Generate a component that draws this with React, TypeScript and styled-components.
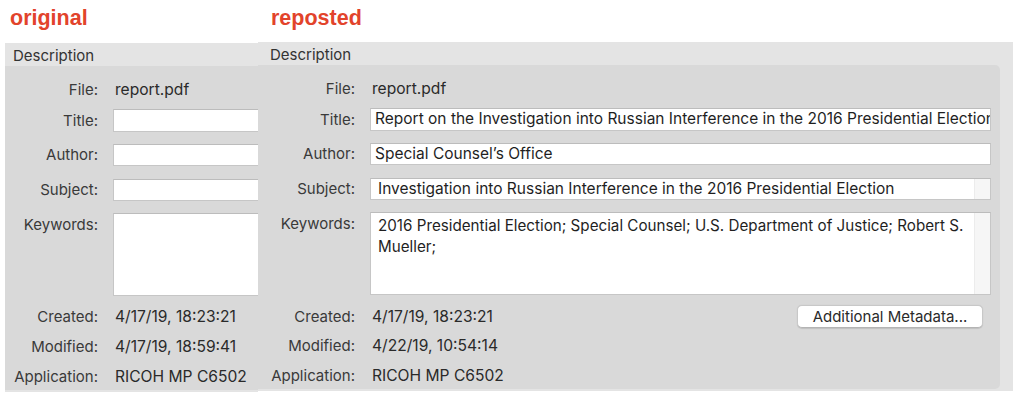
import React from "react";
import styled, { createGlobalStyle } from "styled-components";

const GlobalStyle = createGlobalStyle`
  html, body { margin: 0; padding: 0; background: #ffffff; }
  body { font-family: Inter, "Noto Sans", "Liberation Sans", sans-serif; -webkit-font-smoothing: antialiased; }
`;

const Page = styled.div`
  display: flex;
  align-items: flex-start;
  width: 1024px;
  height: 400px;
  padding-left: 5px;
  box-sizing: border-box;
`;

const Column = styled.div<{ $width: number }>`
  display: flex;
  flex-direction: column;
  width: ${(p) => p.$width}px;
  flex: none;
  overflow: hidden;
`;

const Heading = styled.div<{ $height: number; $indent: number }>`
  height: ${(p) => p.$height}px;
  box-sizing: border-box;
  padding: 6px 0 0 ${(p) => p.$indent}px;
  font-family: "Liberation Sans", Arial, sans-serif;
  font-weight: 700;
  font-size: 21.5px;
  line-height: 24px;
  color: #e2432b;
`;

const Panel = styled.div`
  display: flex;
  flex-direction: column;
  background: #e4e4e4;
  height: 349px;
`;

const PanelHeader = styled.div<{ $indent: number }>`
  height: 23px;
  box-sizing: border-box;
  flex: none;
  padding: 3px 0 0 ${(p) => p.$indent}px;
  font-size: 15px;
  line-height: 20px;
  color: #333333;
`;

const InnerBox = styled.div<{ $width?: number; $right: number }>`
  flex: none;
  height: 324px;
  width: ${(p) => (p.$width ? `${p.$width}px` : "auto")};
  margin-right: ${(p) => p.$right}px;
  background: #d9d9d9;
  border-radius: 0 5px 5px 0;
  display: flex;
  flex-direction: column;
  padding-right: 9px;
  box-sizing: border-box;
`;

const Row = styled.div<{ $label: number; $mt: number; $h: number; $top?: boolean }>`
  display: grid;
  grid-template-columns: ${(p) => p.$label}px 1fr;
  column-gap: 15px;
  margin-top: ${(p) => p.$mt}px;
  height: ${(p) => p.$h}px;
  align-items: ${(p) => (p.$top ? "start" : "center")};
  flex: none;
`;

const Label = styled.div<{ $pt?: number }>`
  text-align: right;
  font-size: 15px;
  line-height: 20px;
  color: #3a3a3a;
  padding-top: ${(p) => p.$pt ?? 0}px;
  white-space: nowrap;
`;

const Value = styled.div`
  font-size: 15.6px;
  line-height: 20px;
  color: #2a2a2a;
  white-space: nowrap;
  padding-left: 2px;
`;

const ValueWithButton = styled.div`
  display: flex;
  align-items: center;
  justify-content: space-between;
  padding-right: 8px;
`;

const Field = styled.div<{ $h: number; $pl: number }>`
  display: flex;
  height: ${(p) => p.$h}px;
  box-sizing: border-box;
  background: #ffffff;
  border: 1px solid #c6c6c6;
  border-top-color: #bcbcbc;
  overflow: hidden;
  padding-left: ${(p) => p.$pl}px;
  font-size: 15.5px;
  color: #1f1f1f;
`;

const FieldText = styled.div<{ $multi?: boolean }>`
  flex: 1;
  min-width: 0;
  overflow: hidden;
  white-space: ${(p) => (p.$multi ? "normal" : "nowrap")};
  font-size: ${(p) => (p.$multi ? "15.2px" : "inherit")};
  line-height: ${(p) => (p.$multi ? "21px" : "20px")};
  padding-top: ${(p) => (p.$multi ? "2px" : "0")};
`;

const Scroller = styled.div`
  width: 15px;
  flex: none;
  background: #f6f6f6;
  border-left: 1px solid #ececec;
`;

const MetaButton = styled.button`
  width: 186px;
  height: 23px;
  box-sizing: border-box;
  background: #ffffff;
  border: 1px solid #c8c8c8;
  border-bottom-color: #b4b4b4;
  border-radius: 5px;
  box-shadow: 0 0.5px 1px rgba(0, 0, 0, 0.12);
  font-family: inherit;
  font-size: 15px;
  line-height: 20px;
  color: #2a2a2a;
  padding: 0;
`;

type Data = {
  title: string;
  author: string;
  subject: string;
  keywords: string;
  created: string;
  modified: string;
};

function MetaPanel({ data, label, repost }: { data: Data; label: number; repost?: boolean }) {
  return (
    <Panel>
      <PanelHeader $indent={repost ? 12 : 8}>Description</PanelHeader>
      <InnerBox $width={repost ? undefined : 420} $right={repost ? 13 : 0}>
        <Row $label={label} $mt={13} $h={22}>
          <Label>File:</Label>
          <Value>report.pdf</Value>
        </Row>
        <Row $label={label} $mt={8} $h={23}>
          <Label>Title:</Label>
          <Field $h={23} $pl={4}>
            <FieldText>{data.title}</FieldText>
          </Field>
        </Row>
        <Row $label={label} $mt={12} $h={22}>
          <Label>Author:</Label>
          <Field $h={22} $pl={4}>
            <FieldText>{data.author}</FieldText>
          </Field>
        </Row>
        <Row $label={label} $mt={13} $h={22}>
          <Label>Subject:</Label>
          <Field $h={22} $pl={7}>
            <FieldText>{data.subject}</FieldText>
            {repost && <Scroller />}
          </Field>
        </Row>
        <Row $label={label} $mt={12} $h={83} $top>
          <Label $pt={2}>Keywords:</Label>
          <Field $h={83} $pl={7}>
            <FieldText $multi>{data.keywords}</FieldText>
            {repost && <Scroller />}
          </Field>
        </Row>
        <Row $label={label} $mt={10} $h={22}>
          <Label>Created:</Label>
          {repost ? (
            <ValueWithButton>
              <Value>{data.created}</Value>
              <MetaButton>Additional Metadata...</MetaButton>
            </ValueWithButton>
          ) : (
            <Value>{data.created}</Value>
          )}
        </Row>
        <Row $label={label} $mt={8} $h={22}>
          <Label>Modified:</Label>
          <Value>{data.modified}</Value>
        </Row>
        <Row $label={label} $mt={8} $h={22}>
          <Label>Application:</Label>
          <Value>RICOH MP C6502</Value>
        </Row>
      </InnerBox>
    </Panel>
  );
}

const original: Data = {
  title: "",
  author: "",
  subject: "",
  keywords: "",
  created: "4/17/19, 18:23:21",
  modified: "4/17/19, 18:59:41",
};

const reposted: Data = {
  title: "Report on the Investigation into Russian Interference in the 2016 Presidential Election",
  author: "Special Counsel\u2019s Office",
  subject: "Investigation into Russian Interference in the 2016 Presidential Election",
  keywords:
    "2016 Presidential Election; Special Counsel; U.S. Department of Justice; Robert S. Mueller;",
  created: "4/17/19, 18:23:21",
  modified: "4/22/19, 10:54:14",
};

export default function App() {
  return (
    <>
      <GlobalStyle />
      <Page>
        <Column $width={253}>
          <Heading $height={43} $indent={5}>original</Heading>
          <MetaPanel data={original} label={93} />
        </Column>
        <Column $width={755}>
          <Heading $height={42} $indent={13}>reposted</Heading>
          <MetaPanel data={reposted} label={97} repost />
        </Column>
      </Page>
    </>
  );
}
